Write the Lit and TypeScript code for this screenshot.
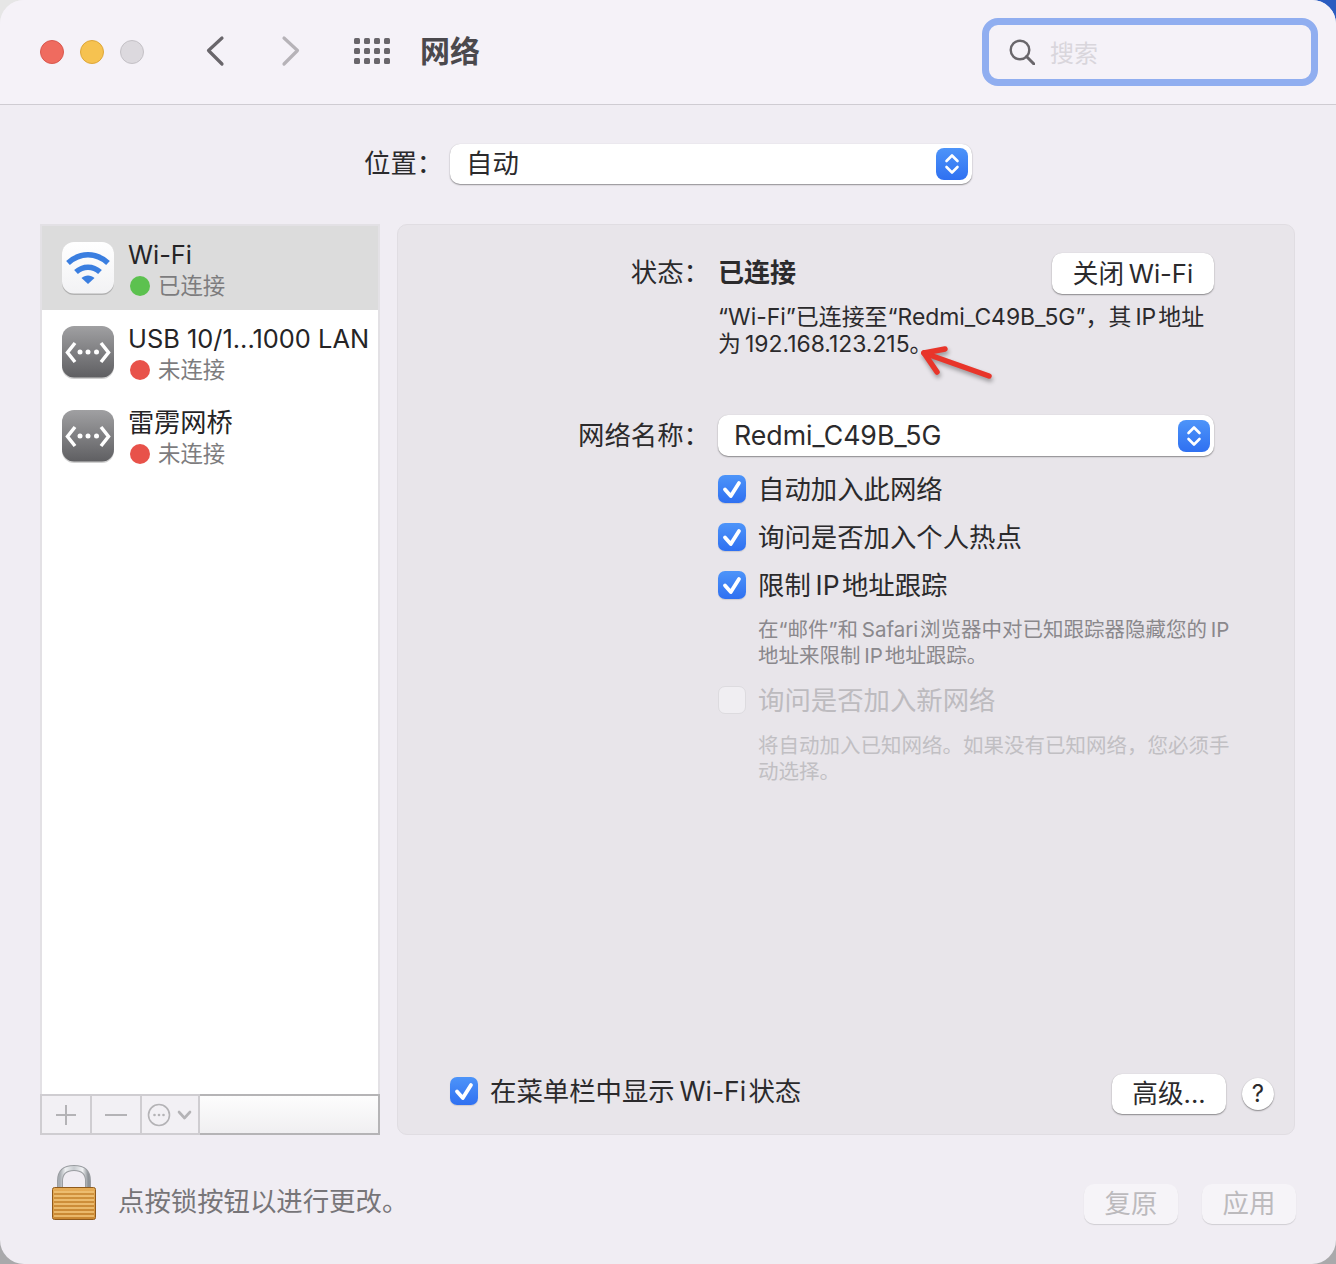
import { LitElement, html, css, svg } from "lit";
import { customElement } from "lit/decorators.js";

const stepper = html`<span class="stepper"><svg width="32" height="32" viewBox="0 0 32 32" fill="none" stroke="#fff" stroke-width="2.6" stroke-linecap="round" stroke-linejoin="round"><path d="M10.5 13 16 7.5 21.5 13"/><path d="M10.5 19 16 24.5 21.5 19"/></svg></span>`;
const tick = svg`<svg width="28" height="28" viewBox="0 0 28 28" fill="none" stroke="#fff" stroke-width="3.8" stroke-linecap="round" stroke-linejoin="round"><path d="M7 14.5 12.8 21 21 8"/></svg>`;
const check = html`<span class="cb on">${tick}</span>`;

const wifiIcon = html`<svg class="dev" width="56" height="56" viewBox="0 0 56 56">
  <defs><linearGradient id="wbg" x1="0" y1="0" x2="0" y2="1"><stop offset="0" stop-color="#ffffff"/><stop offset="1" stop-color="#f2f2f4"/></linearGradient></defs>
  <rect x="2" y="2" width="52" height="52" rx="12" fill="#00000030" transform="translate(0 1)"/>
  <rect x="2" y="2" width="52" height="51.5" rx="12" fill="url(#wbg)"/>
  <g fill="none" stroke="#3a7ee0" stroke-width="5.5">
    <path d="M8 23C20 12 36 12 48 23"/>
    <path d="M16 32C23 25.5 33 25.5 40 32"/>
  </g>
  <path d="M28 44 21.5 38C25 34.5 31 34.5 34.5 38Z" fill="#3a7ee0"/>
</svg>`;

const ethIcon = html`<svg class="dev" width="56" height="56" viewBox="0 0 56 56">
  <defs><linearGradient id="ebg" x1="0" y1="0" x2="0" y2="1"><stop offset="0" stop-color="#a0a0a2"/><stop offset="1" stop-color="#5f5f62"/></linearGradient></defs>
  <rect x="2" y="2" width="52" height="52" rx="12" fill="#00000030" transform="translate(0 1)"/>
  <rect x="2" y="2" width="52" height="51.5" rx="12" fill="url(#ebg)"/>
  <g fill="none" stroke="#fff" stroke-width="3.5" stroke-linecap="butt" stroke-linejoin="miter">
    <path d="M15 19 7.5 28.500 15 38"/>
    <path d="M41 19 48.500 28.500 41 38"/>
  </g>
  <g fill="#fff"><circle cx="20" cy="28" r="2.500"/><circle cx="28" cy="28" r="2.500"/><circle cx="36.500" cy="28" r="2.500"/></g>
</svg>`;

const lock = html`<svg width="46" height="56" viewBox="0 0 46 56">
  <defs>
    <linearGradient id="sh" x1="0" y1="0" x2="1" y2="0"><stop offset="0" stop-color="#a8adb2"/><stop offset=".2" stop-color="#eef0f2"/><stop offset=".5" stop-color="#c8ccd0"/><stop offset=".8" stop-color="#f2f3f5"/><stop offset="1" stop-color="#8f9499"/></linearGradient>
    <linearGradient id="bd" x1="0" y1="0" x2="0" y2="1"><stop offset="0" stop-color="#e6ad58"/><stop offset="1" stop-color="#d4923c"/></linearGradient>
  </defs>
  <path d="M9 25V16C9 7 14 3 23 3S37 7 37 16V25" fill="none" stroke="#9a9da1" stroke-width="6"/>
  <path d="M9 25V16C9 7 14 3 23 3S37 7 37 16V25" fill="none" stroke="url(#sh)" stroke-width="4"/>
  <rect x="1.500" y="22.500" width="43" height="32" rx="2" fill="url(#bd)" stroke="#8f5a1c" stroke-width="1"/>
  <g stroke="#f0c47a" stroke-width="1.500"><path d="M3 27H43M3 31H43M3 35H43M3 39H43M3 43H43M3 47H43M3 51H43"/></g>
  <g stroke="#bd7c28" stroke-width="1"><path d="M3 29H43M3 33H43M3 37H43M3 41H43M3 45H43M3 49H43M3 53H43"/></g>
</svg>`;

@customElement("app-root")
export class AppRoot extends LitElement {
  static styles = css`
    :host {
      display: block;
      width: 1336px;
      height: 1264px;
      background: conic-gradient(#2a5cc0 0 25%, #a9a9ab 25% 75%, #e6e6e6 75%);
      font-family: "Inter", "Noto Sans CJK SC", sans-serif;
      color: #2b2a2c;
      font-size: 26.4px;
    }
    .win {
      height: 100%;
      border-radius: 24px;
      overflow: hidden;
      background: #f0edf3;
      display: flex;
      flex-direction: column;
      position: relative;
    }
    .title {
      height: 104px;
      flex: none;
      box-sizing: content-box;
      border-bottom: 1px solid #cfccd2;
      background: #f5f2f8;
      display: flex;
      align-items: center;
      padding: 0 18px 0 40px;
    }
    .lights { display: flex; gap: 16px; }
    .light { width: 24px; height: 24px; border-radius: 50%; box-sizing: border-box; border: 1px solid; }
    .red { background: #ef6b5f; border-color: #d9584e; }
    .yellow { background: #f6c250; border-color: #dea73a; }
    .gray { background: #dcd9de; border-color: #c4c1c6; }
    .nav { display: flex; margin: 0 0 2px 61px; gap: 56px; }
    .nav svg { display: block; }
    .apps { margin: 0 0 2px 53px; display: grid; grid-template-columns: repeat(4, 6px); gap: 4px; }
    .apps i { width: 6px; height: 6px; border-radius: 1.500px; background: #69666b; }
    .heading { margin: 0 0 2px 30px; font-size: 30px; font-weight: 700; color: #4b494d; line-height: 40px; }
    .search {
      margin-left: auto;
      width: 336px;
      height: 68px;
      box-sizing: border-box;
      border: 7px solid #90aef0;
      border-radius: 16px;
      display: flex;
      align-items: center;
      padding: 0 0 0 20px;
      gap: 15px;
      color: #d9d6dc;
      font-size: 24px;
    }
    .search span { padding-bottom: 2px; }
    .search svg { display: block; }

    .loc { margin-top: 39px; padding-left: 364px; display: flex; align-items: center; height: 40px; }
    .loc-label { width: 86px; margin-bottom: 6px; }
    .select {
      height: 41px;
      box-sizing: border-box;
      background: #fff;
      border-radius: 10px;
      box-shadow: 0 1px 1.500px #00000066, 0 0 1px #00000026;
      display: flex;
      align-items: center;
      justify-content: space-between;
      padding: 0 4px 0 16px;
      line-height: 1;
    }
    .loc .select { width: 522px; height: 40px; }
    .loc .select > span:first-child { padding-bottom: 2px; }
    .net .select > span:first-child { font-size: 26.700px; padding-bottom: 1px; }
    .stepper {
      width: 32px;
      height: 32px;
      border-radius: 8px;
      background: linear-gradient(#4d94f9, #2f70f1);
      display: block;
    }
    .stepper svg { display: block; }

    .main {
      margin-top: 40px;
      padding: 0 41px 0 40px;
      height: 911px;
      flex: none;
      display: grid;
      grid-template-columns: 340px 898px;
      gap: 17px;
    }
    .list {
      box-sizing: border-box;
      background: #fff;
      border: 2px solid #e3e1e5;
      border-bottom: 0;
      display: flex;
      flex-direction: column;
    }
    .row {
      height: 84px;
      flex: none;
      display: grid;
      grid-template-columns: 56px 1fr;
      column-gap: 12px;
      padding-left: 18px;
      align-items: center;
      white-space: nowrap;
    }
    .row.sel { background: #dcdcdc; }
    .dev { display: block; }
    .txt { align-self: start; margin-top: 14px; }
    .name { line-height: 30px; font-size: 25.400px; color: #252426; }
    .name.cjk { font-size: 26.200px; }
    .status { display: flex; align-items: center; gap: 8px; color: #7d7c7e; font-size: 22.400px; line-height: 30px; margin-left: 2px; margin-top: 1px; }
    .dot { width: 20px; height: 20px; border-radius: 50%; }
    .dot.g { background: #5cc14f; }
    .dot.r { background: #e8524a; }
    .tools {
      margin: auto -2px 0;
      height: 41px;
      display: grid;
      grid-template-columns: 52px 50px 58px 1fr;
      background: #f2f0f4;
    }
    .tool {
      box-sizing: border-box;
      border: 2px solid #cfcdd1;
      border-left: 0;
      display: flex;
      align-items: center;
      justify-content: center;
    }
    .tool:first-child { border-left: 2px solid #cfcdd1; }
    .tool:last-child { border-color: #b5b4b6; background: linear-gradient(#fdfdfd, #f0eff1); }
    .tool svg { display: block; }
    .tool.more { padding-left: 4px; }

    .panel {
      background: #e8e5ea;
      border: 1px solid #e0dde2;
      border-radius: 10px;
      box-sizing: border-box;
      padding: 28px 20px 20px 0;
      display: flex;
      flex-direction: column;
    }
    .grid { display: grid; grid-template-columns: 312px 496px; column-gap: 8px; }
    .lab { text-align: right; white-space: nowrap; line-height: 39px; }
    .lab.net { line-height: 41px; }
    .strong { font-weight: 700; line-height: 39px; font-size: 26px; padding-bottom: 2px; }
    .st { display: flex; justify-content: space-between; align-items: center; height: 41px; }
    .btn {
      height: 41px;
      box-sizing: border-box;
      background: #fff;
      border-radius: 10px;
      box-shadow: 0 1px 1.500px #00000066, 0 0 1px #00000026;
      display: inline-flex;
      align-items: center;
      justify-content: center;
      font-size: 25.600px;
      white-space: nowrap;
      padding-bottom: 5px;
    }
    .wifi-btn { width: 162px; }
    .info { grid-column: 2; font-size: 22.900px; line-height: 27px; margin-top: 10px; white-space: nowrap; height: 54px; }
    .net { margin-top: 57px; }
    .chk-row, .footnote { white-space: nowrap; }
    .opts { grid-column: 2; margin-top: 19px; display: flex; flex-direction: column; }
    .chk-row { display: flex; align-items: center; gap: 12px; height: 28px; line-height: 28px; }
    .chk-row + .chk-row { margin-top: 20px; }
    .cb {
      width: 28px;
      height: 28px;
      flex: none;
      box-sizing: border-box;
      border-radius: 7px;
      display: block;
    }
    .cb svg { display: block; }
    .cb.on { background: linear-gradient(#4d94f9, #2f70f1); box-shadow: 0 1px 1px #0000001f; }
    .cb.off { background: #f0eef2; border: 1px solid #dddbdf; }
    .footnote { margin-left: 40px; font-size: 20.500px; line-height: 26px; color: #8a888c; margin-top: 17px; padding-top: 1px; }
    .dim { color: #bdbbbf; margin-top: 17px; }
    .footnote.faint { color: #c1bfc3; margin-top: 18px; }
    .bottom { margin-top: auto; display: flex; align-items: center; padding-left: 52px; }
    .bottom .chk-row { margin-bottom: 6px; }
    .adv { width: 114px; height: 40px; margin-left: auto; }
    .help { width: 32px; height: 32px; border-radius: 50%; margin-left: 16px; font-size: 24px; padding-bottom: 2px; }

    .foot { flex: 1; display: flex; align-items: flex-start; padding: 30px 40px 0 51px; }
    .foot svg { display: block; }
    .foot-text { margin: 18px 0 0 21px; line-height: 36px; color: #777578; }
    .foot-btns { margin: 19px 0 0 auto; display: flex; gap: 24px; }
    .ghost {
      width: 94px;
      height: 40px;
      box-sizing: border-box;
      padding-bottom: 5px;
      border-radius: 10px;
      background: #f6f4f8;
      box-shadow: 0 1px 1px #00000022;
      color: #bcbabd;
      display: flex;
      align-items: center;
      justify-content: center;
    }
    .arrow { position: absolute; left: 915px; top: 340px; pointer-events: none; filter: drop-shadow(1px 3px 2px #00000059); }
  `;

  render() {
    return html`<div class="win">
      <header class="title">
        <div class="lights"><span class="light red"></span><span class="light yellow"></span><span class="light gray"></span></div>
        <div class="nav">
          <svg width="20" height="32" viewBox="0 0 20 32" fill="none" stroke="#69666b" stroke-width="3.200" stroke-linecap="round" stroke-linejoin="round"><path d="M17 3 3.500 15.500 17 29"/></svg>
          <svg width="20" height="32" viewBox="0 0 20 32" fill="none" stroke="#b6b3b8" stroke-width="3.200" stroke-linecap="round" stroke-linejoin="round"><path d="M3 3 16.500 15.500 3 29"/></svg>
        </div>
        <div class="apps">${Array.from({ length: 12 }, () => html`<i></i>`)}</div>
        <div class="heading">网络</div>
        <div class="search">
          <svg width="26" height="26" viewBox="0 0 26 26" fill="none" stroke="#69666b" stroke-width="2.400"><circle cx="11" cy="11" r="9.300"/><path d="M17.500 17.500 25 25" stroke-width="3" stroke-linecap="round"/></svg>
          <span>搜索</span>
        </div>
      </header>

      <div class="loc">
        <span class="loc-label">位置：</span>
        <div class="select"><span>自动</span>${stepper}</div>
      </div>

      <div class="main">
        <aside class="list">
          <div class="row sel">${wifiIcon}<div class="txt"><div class="name">Wi-Fi</div><div class="status"><span class="dot g"></span>已连接</div></div></div>
          <div class="row">${ethIcon}<div class="txt"><div class="name">USB 10/1...1000 LAN</div><div class="status"><span class="dot r"></span>未连接</div></div></div>
          <div class="row">${ethIcon}<div class="txt"><div class="name cjk">雷雳网桥</div><div class="status"><span class="dot r"></span>未连接</div></div></div>
          <div class="tools">
            <div class="tool"><svg width="22" height="22" viewBox="0 0 22 22" stroke="#b4b3b6" stroke-width="2"><path d="M11 1V21M1 11H21"/></svg></div>
            <div class="tool"><svg width="22" height="22" viewBox="0 0 22 22" stroke="#b4b3b6" stroke-width="2"><path d="M0 11H22"/></svg></div>
            <div class="tool more"><svg width="50" height="24" viewBox="0 0 50 24" fill="none" stroke="#b4b3b6" stroke-width="1.600"><circle cx="12" cy="12" r="10.500"/><g fill="#b4b3b6" stroke="none"><circle cx="7.500" cy="12" r="1.300"/><circle cx="12" cy="12" r="1.300"/><circle cx="16.500" cy="12" r="1.300"/></g><path d="M32 9 37.500 15 43 9" stroke-width="2.600" stroke-linecap="round" stroke-linejoin="round"/></svg></div>
            <div class="tool"></div>
          </div>
        </aside>

        <section class="panel">
          <div class="grid">
            <div class="lab">状态：</div>
            <div class="st"><span class="strong">已连接</span><span class="btn wifi-btn">关闭&thinsp;Wi-Fi</span></div>
            <div class="info">“Wi-Fi”已连接至“Redmi_C49B_5G”，其&thinsp;IP&hairsp;地址<br />为&thinsp;192.168.123.215。</div>
            <div class="lab net">网络名称：</div>
            <div class="net"><div class="select"><span>Redmi_C49B_5G</span>${stepper}</div></div>
            <div class="opts">
              <label class="chk-row">${check}<span>自动加入此网络</span></label>
              <label class="chk-row">${check}<span>询问是否加入个人热点</span></label>
              <label class="chk-row">${check}<span>限制&thinsp;IP&hairsp;地址跟踪</span></label>
              <div class="footnote">在“邮件”和&thinsp;Safari&hairsp;浏览器中对已知跟踪器隐藏您的&thinsp;IP<br />地址来限制&thinsp;IP&hairsp;地址跟踪。</div>
              <label class="chk-row dim"><span class="cb off"></span><span>询问是否加入新网络</span></label>
              <div class="footnote faint">将自动加入已知网络。如果没有已知网络，您必须手<br />动选择。</div>
            </div>
          </div>
          <div class="bottom">
            <label class="chk-row">${check}<span>在菜单栏中显示&thinsp;Wi-Fi&hairsp;状态</span></label>
            <span class="btn adv">高级...</span>
            <span class="btn help">?</span>
          </div>
        </section>
      </div>

      <footer class="foot">
        ${lock}
        <div class="foot-text">点按锁按钮以进行更改。</div>
        <div class="foot-btns"><span class="ghost">复原</span><span class="ghost">应用</span></div>
      </footer>

      <svg class="arrow" width="90" height="50" viewBox="0 0 90 50" fill="none" stroke="#e8352a" stroke-width="5.500" stroke-linecap="round" stroke-linejoin="round">
        <path d="M74 36 9 13"/><path d="M9 13 30 9"/><path d="M9 13 22 32"/>
      </svg>
    </div>`;
  }
}
